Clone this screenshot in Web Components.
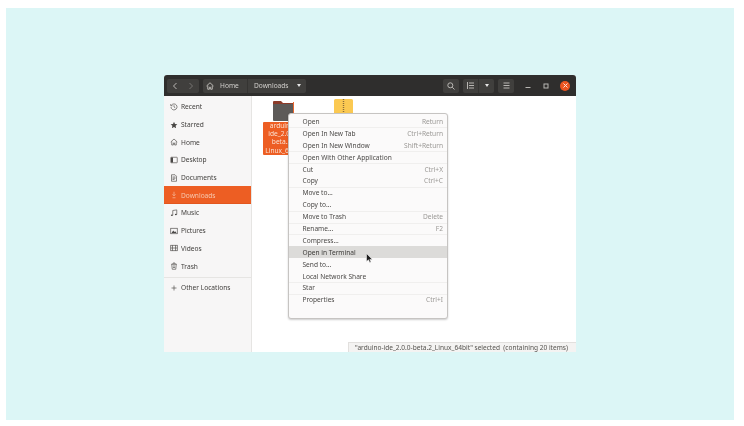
<!DOCTYPE html>
<html>
<head>
<meta charset="utf-8">
<title>Files</title>
<style>
  html, body { margin: 0; padding: 0; background: #fff; }
  body { font-family: "Noto Sans", "Open Sans", sans-serif; }
</style>
</head>
<body>
<page-panel>
  <files-window>
    <header-bar slot="header"></header-bar>
    <nav-sidebar slot="sidebar">
      <side-item icon="recent">Recent</side-item>
      <side-item icon="star">Starred</side-item>
      <side-item icon="home">Home</side-item>
      <side-item icon="desktop">Desktop</side-item>
      <side-item icon="documents">Documents</side-item>
      <side-item icon="downloads" active>Downloads</side-item>
      <side-item icon="music">Music</side-item>
      <side-item icon="pictures">Pictures</side-item>
      <side-item icon="videos">Videos</side-item>
      <side-item icon="trash">Trash</side-item>
      <side-item icon="plus" separated>Other Locations</side-item>
    </nav-sidebar>
    <file-area slot="content">
      <context-menu>
        <menu-item key="Return" sep>Open</menu-item>
        <menu-item key="Ctrl+Return">Open In New Tab</menu-item>
        <menu-item key="Shift+Return" sep>Open In New Window</menu-item>
        <menu-item sep>Open With Other Application</menu-item>
        <menu-item key="Ctrl+X">Cut</menu-item>
        <menu-item key="Ctrl+C" sep>Copy</menu-item>
        <menu-item>Move to…</menu-item>
        <menu-item sep>Copy to…</menu-item>
        <menu-item key="Delete" sep>Move to Trash</menu-item>
        <menu-item key="F2" sep>Rename…</menu-item>
        <menu-item>Compress…</menu-item>
        <menu-item hover>Open in Terminal</menu-item>
        <menu-item>Send to…</menu-item>
        <menu-item sep>Local Network Share</menu-item>
        <menu-item sep>Star</menu-item>
        <menu-item key="Ctrl+I">Properties</menu-item>
      </context-menu>
      <status-bar>"arduino-ide_2.0.0-beta.2_Linux_64bit" selected&nbsp; (containing 20 items)</status-bar>
    </file-area>
  </files-window>
</page-panel>

<script>
// small stroke icons for the sidebar, all on a 16x16 box
const ICONS = {
  recent: '<path d="M3 4.500A6 6 0 1 1 2 8" fill="none"/><path d="M1.500 2v3.500H5" fill="none"/><path d="M8 4.500V8l2.500 1.500" fill="none"/>',
  star: '<path stroke="none" fill="currentColor" d="M8 1.500l2 4.400 4.700.5-3.500 3.200 1 4.700L8 11.900l-4.200 2.400 1-4.700L1.300 6.400 6 5.900z"/>',
  home: '<path d="M1.500 8L8 2l6.500 6" fill="none"/><path d="M3.500 7v7h3.200v-4h2.600v4h3.200V7" fill="none"/>',
  desktop: '<rect x="1.500" y="2.500" width="13" height="11" rx="1" fill="none"/><rect x="2" y="3" width="4" height="10" fill="currentColor" stroke="none"/>',
  documents: '<path d="M3 1.500h7l3 3v10H3z" fill="none"/><path d="M5 6h6M5 8.500h6M5 11h4" fill="none"/>',
  downloads: '<path d="M8 1.500v8M5 6.500l3 3 3-3" fill="none"/><path d="M5 13.500h6" fill="none"/>',
  music: '<path d="M5.500 12.500V3l8-1.200v9" fill="none"/><ellipse cx="3.700" cy="12.500" rx="2" ry="1.600" fill="currentColor" stroke="none"/><ellipse cx="11.700" cy="11" rx="2" ry="1.600" fill="currentColor" stroke="none"/>',
  pictures: '<rect x="1.500" y="2.500" width="13" height="11" fill="none"/><path stroke="none" fill="currentColor" d="M3 12l3.500-5 2.500 3 1.500-1.500L13 12z"/>',
  videos: '<rect x="1.500" y="2.500" width="13" height="11" fill="none"/><path d="M5 2.500v11M11 2.500v11M1.500 8h13" fill="none"/>',
  trash: '<path d="M2.500 4.500h11M6 4.500V2h4v2.500M3.500 4.500l1 10h7l1-10" fill="none"/><path d="M6 8h4M6 11h4" fill="none"/>',
  plus: '<path d="M8 3v10M3 8h10" fill="none"/>'
};

class PagePanel extends HTMLElement {
  constructor() {
    super();
    this.attachShadow({mode: "open"}).innerHTML = `<style>
      :host { display: block; width: 728px; height: 412px; margin: 8px 0 0 6px; background: #dcf6f6; padding: 67px 0 0 158px; box-sizing: border-box; }
    </style><slot></slot>`;
  }
}

class FilesWindow extends HTMLElement {
  constructor() {
    super();
    this.attachShadow({mode: "open"}).innerHTML = `<style>
      :host { display: grid; grid-template-columns: 88px 1fr; grid-template-rows: 21px 1fr; width: 412px; height: 277px; background: #fff; border-radius: 3px 3px 0 0; overflow: hidden; filter: blur(0.35px); }
      .top { grid-column: 1 / 3; display: block; }
    </style>
    <slot name="header" class="top"></slot>
    <slot name="sidebar"></slot>
    <slot name="content"></slot>`;
  }
}

class HeaderBar extends HTMLElement {
  constructor() {
    super();
    this.attachShadow({mode: "open"}).innerHTML = `<style>
      :host { display: flex; align-items: center; height: 21px; padding: 0 6px 0 3px; box-sizing: border-box; background: #2f2e2d; color: #d2d0cd; font-size: 6.600px; }
      .group { display: flex; flex: none; height: 14px; background: #403f3d; border-radius: 2px; align-items: center; }
      .group > div { display: flex; align-items: center; justify-content: center; height: 100%; }
      .group > div + div { border-left: 1px solid #353432; }
      svg { display: block; stroke: #b8b6b3; fill: none; stroke-width: 1; }
      .nav { width: 32px; margin-right: 4px; }
      .nav > div { width: 16px; border: 0 !important; }
      .nav svg.off { opacity: .45; }
      .path { width: 103px; margin-right: 137px; }
      .home { width: 44px; gap: 6px; justify-content: flex-start !important; padding-left: 3px; box-sizing: border-box; }
      .dl { flex: 1; gap: 8px; padding-left: 6px; justify-content: flex-start !important; }
      .caret { width: 0; height: 0; border: 2.500px solid transparent; border-top: 3px solid #e6e6e6; border-bottom: 0; }
      .search { width: 16px; margin-right: 4px; }
      .view { width: 31px; margin-right: 4px; }
      .view > div { flex: 1; }
      .menu { width: 16px; margin-right: 5px; }
      .ctl { width: 18px; flex: none; display: flex; justify-content: center; }
      .close { width: 10px; height: 10px; flex: none; border-radius: 50%; background: #ea5420; display: flex; align-items: center; justify-content: center; margin-left: 5px; }
      .close svg { stroke: #fbe3d8; }
    </style>
    <div class="group nav">
      <div><svg width="8" height="8" viewBox="0 0 8 8"><path d="M5.500 1L2.500 4l3 3"/></svg></div>
      <div><svg class="off" width="8" height="8" viewBox="0 0 8 8"><path d="M2.500 1l3 3-3 3"/></svg></div>
    </div>
    <div class="group path">
      <div class="home"><svg width="8" height="8" viewBox="0 0 16 16"><path stroke-width="2" d="M1 8l7-6.500 7 6.500M3.500 7v7.500h3.200v-4h2.600v4h3.200V7"/></svg><span>Home</span></div>
      <div class="dl"><span>Downloads</span><i class="caret"></i></div>
    </div>
    <div class="group search"><div style="width:100%"><svg width="8" height="8" viewBox="0 0 8 8"><circle cx="3.300" cy="3.300" r="2.500"/><path d="M5.200 5.200L7.500 7.500"/></svg></div></div>
    <div class="group view">
      <div><svg width="7" height="7" viewBox="0 0 7 7"><path d="M0.500 0v7M2 1h5M2 3.500h5M2 6h5"/></svg></div>
      <div><i class="caret"></i></div>
    </div>
    <div class="group menu"><div style="width:100%"><svg width="7" height="7" viewBox="0 0 7 7"><path d="M0.500 1h6M0.500 3.500h6M0.500 6h6"/></svg></div></div>
    <div class="ctl"><svg width="6" height="6" viewBox="0 0 6 6"><path d="M0.500 4.500h5"/></svg></div>
    <div class="ctl"><svg width="6" height="6" viewBox="0 0 6 6"><rect x="1" y="1" width="4" height="4"/></svg></div>
    <div class="close"><svg width="5" height="5" viewBox="0 0 5 5"><path d="M0.500 0.500l4 4M4.500 0.500l-4 4"/></svg></div>`;
  }
}

class NavSidebar extends HTMLElement {
  constructor() {
    super();
    this.attachShadow({mode: "open"}).innerHTML = `<style>
      :host { display: block; background: #f7f6f6; border-right: 1px solid #e6e5e3; box-sizing: border-box; padding-top: 2px; }
    </style><slot></slot>`;
  }
}

class SideItem extends HTMLElement {
  constructor() {
    super();
    this.attachShadow({mode: "open"}).innerHTML = `<style>
      :host { display: flex; align-items: center; gap: 3px; height: 17.700px; padding-left: 6px; font-size: 6.600px; color: #3f3d3b; box-sizing: border-box; }
      :host([active]) { background: #ed5e23; color: #f6c9b0; box-shadow: inset 0 -1px 0 #e2561e; }
      :host([separated]) { margin-top: 2px; border-top: 1px solid #e6e5e3; height: 21px; }
      svg { width: 8px; height: 8px; flex: none; stroke: currentColor; stroke-width: 1.300; color: #4a4846; }
      :host([active]) svg { color: #f6c9b0; }
    </style><svg viewBox="0 0 16 16"></svg><slot></slot>`;
  }
  connectedCallback() {
    this.shadowRoot.querySelector("svg").innerHTML = ICONS[this.getAttribute("icon")] || "";
  }
}

class FileArea extends HTMLElement {
  constructor() {
    super();
    this.attachShadow({mode: "open"}).innerHTML = `<style>
      :host { display: block; position: relative; background: #fff; height: 100%; }
      .files { display: flex; padding: 5px 0 0 11px; gap: 10px; align-items: flex-start; }
      .file { width: 40px; display: flex; flex-direction: column; align-items: center; }
      .label { background: #ed5e23; color: #fbe0d0; font-size: 6.600px; line-height: 8.200px; text-align: center; width: 40px; height: 33px; border-radius: 1px; margin-top: 1px; }
      ::slotted(context-menu) { position: absolute; left: 36px; top: 17px; }
      ::slotted(status-bar) { position: absolute; right: 0; bottom: 0; }
    </style>
    <div class="files">
      <div class="file">
        <svg width="21" height="20" viewBox="0 0 21 20">
          <path fill="#8c3b2a" d="M1 0h7l2 2h10a1 1 0 0 1 1 1v3H0V1a1 1 0 0 1 1-1z"/>
          <rect y="3" width="21" height="17" rx="1" fill="#5d5a58"/>
          <rect x="20" y="1" width="1" height="18" fill="#e9662f"/>
        </svg>
        <div class="label">arduino-<br>ide_2.0.0-<br>beta.2_<br>Linux_64bit</div>
      </div>
      <div class="file" style="margin-left:10px">
        <svg width="19" height="14" viewBox="0 0 19 14" style="margin-top:-2px">
          <path fill="#fbc952" d="M1.500 0h16a1.500 1.500 0 0 1 1.500 1.500V14H0V1.500A1.500 1.500 0 0 1 1.500 0z"/>
          <path d="M9.500 0v13" stroke="#8a6d3a" stroke-width="1.400" stroke-dasharray="1 1"/>
        </svg>
      </div>
    </div>
    <slot></slot>`;
  }
}

class ContextMenu extends HTMLElement {
  constructor() {
    super();
    this.attachShadow({mode: "open"}).innerHTML = `<style>
      :host { display: block; width: 160px; height: 206px; box-sizing: border-box; padding-top: 1.500px; background: #fbfafa; border: 1px solid #c6c4c2; border-radius: 3px; box-shadow: 0 1px 2px rgba(0,0,0,.2); }
      .cursor { position: absolute; left: 77px; top: 139px; }
    </style><slot></slot>
    <svg class="cursor" width="7" height="10" viewBox="0 0 7 10"><path d="M0.500 0.500v8l2-1.700 1.200 2.700 1.300-.6-1.200-2.500h2.500z" fill="#1d1d1d" stroke="#fff" stroke-width=".5"/></svg>`;
  }
}

class MenuItem extends HTMLElement {
  constructor() {
    super();
    this.attachShadow({mode: "open"}).innerHTML = `<style>
      :host { display: flex; justify-content: space-between; align-items: center; height: 11.900px; padding: 0 4px 0 13.500px; box-sizing: border-box; font-size: 6.600px; color: #4b4947; white-space: nowrap; }
      :host([sep]) { box-shadow: 0 .5px 0 #e6e4e2; }
      :host([hover]) { background: #dcdbd9; color: #3c3a38; }
      .key { color: #9a9895; }
    </style><slot></slot><span class="key"></span>`;
  }
  connectedCallback() {
    this.shadowRoot.querySelector(".key").textContent = this.getAttribute("key") || "";
  }
}

class StatusBar extends HTMLElement {
  constructor() {
    super();
    this.attachShadow({mode: "open"}).innerHTML = `<style>
      :host { display: block; box-sizing: border-box; width: 228px; height: 10px; line-height: 10px; padding-left: 6px; background: #f4f3f2; border: 1px solid #e2e0de; border-width: 1px 0 0 1px; font-size: 6.550px; color: #55534f; white-space: nowrap; overflow: hidden; }
    </style><slot></slot>`;
  }
}

customElements.define("page-panel", PagePanel);
customElements.define("files-window", FilesWindow);
customElements.define("header-bar", HeaderBar);
customElements.define("nav-sidebar", NavSidebar);
customElements.define("side-item", SideItem);
customElements.define("file-area", FileArea);
customElements.define("context-menu", ContextMenu);
customElements.define("menu-item", MenuItem);
customElements.define("status-bar", StatusBar);
</script>
</body>
</html>
